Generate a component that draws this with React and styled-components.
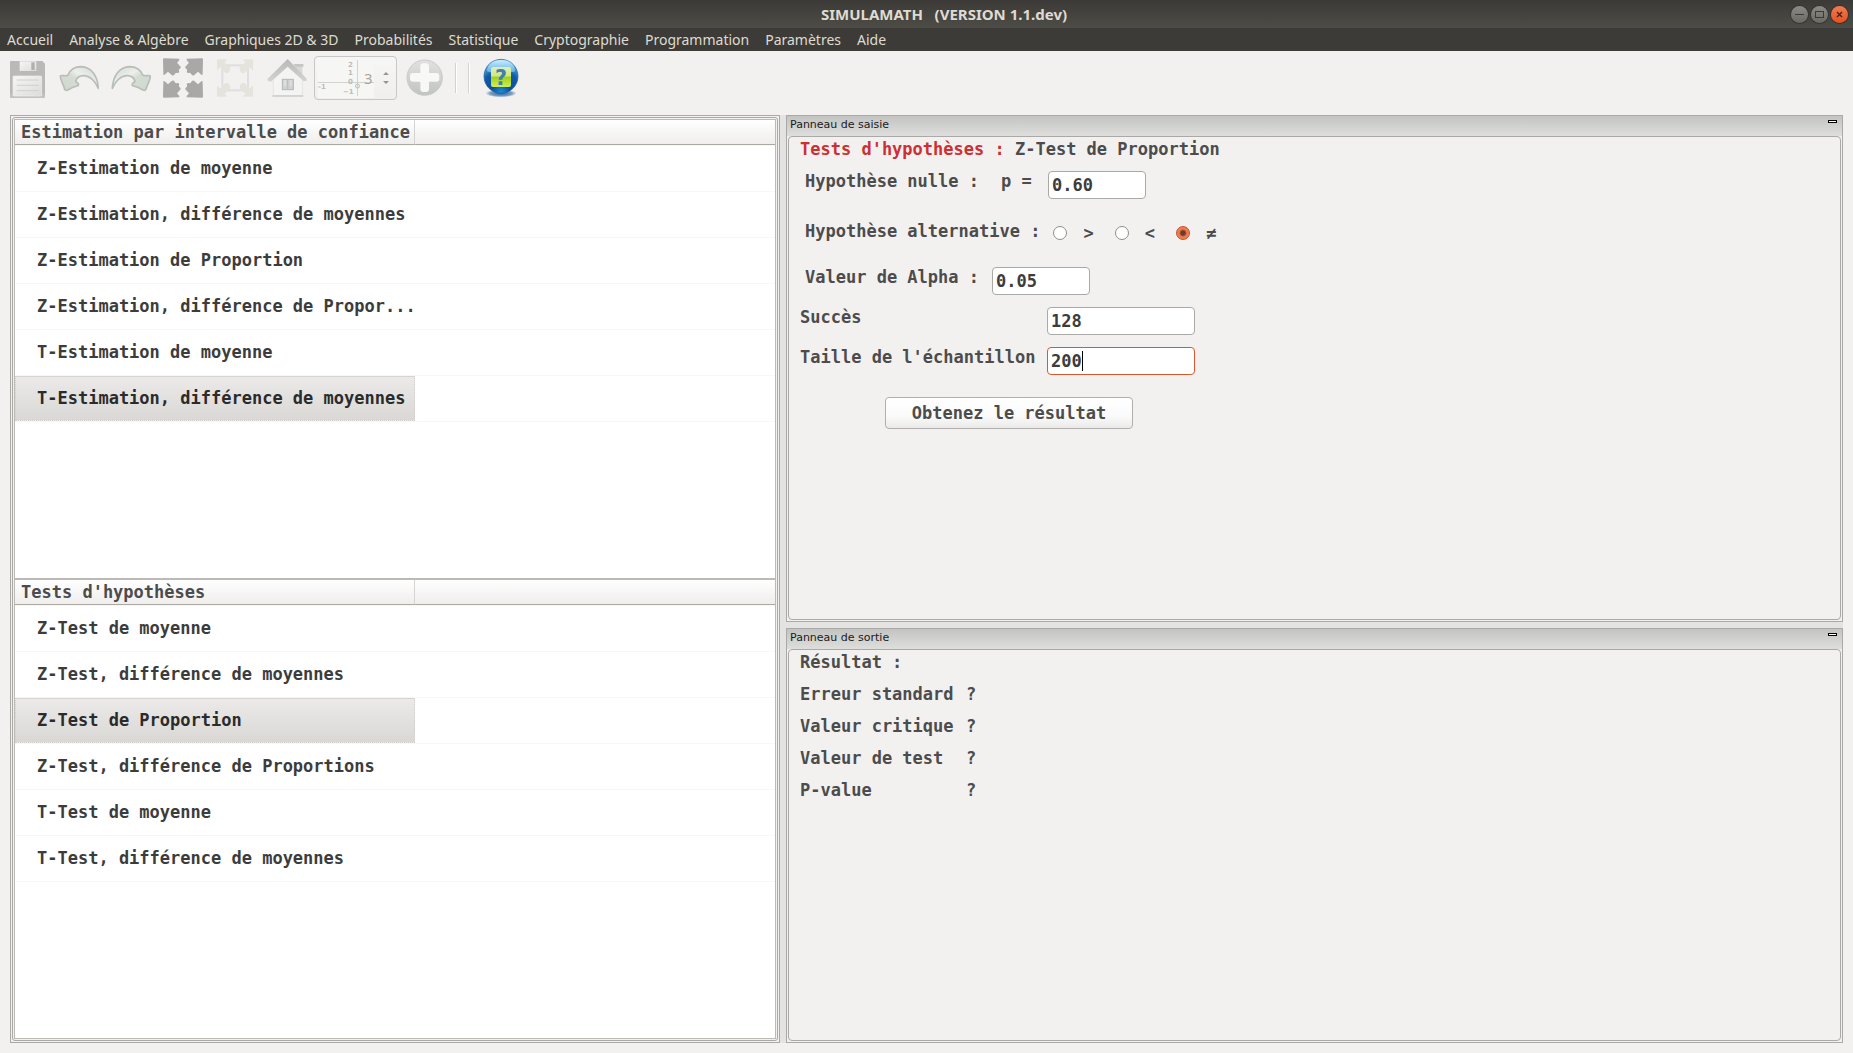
import React, { useState } from "react";
import styled, { createGlobalStyle } from "styled-components";

const menus = [
  "Accueil",
  "Analyse & Algèbre",
  "Graphiques 2D & 3D",
  "Probabilités",
  "Statistique",
  "Cryptographie",
  "Programmation",
  "Paramètres",
  "Aide",
];

const estimations = [
  "Z-Estimation de moyenne",
  "Z-Estimation, différence de moyennes",
  "Z-Estimation de Proportion",
  "Z-Estimation, différence de Propor...",
  "T-Estimation de moyenne",
  "T-Estimation, différence de moyennes",
];

const tests = [
  "Z-Test de moyenne",
  "Z-Test, différence de moyennes",
  "Z-Test de Proportion",
  "Z-Test, différence de Proportions",
  "T-Test de moyenne",
  "T-Test, différence de moyennes",
];

const results = ["Erreur standard", "Valeur critique", "Valeur de test", "P-value"];

function SaveIcon() {
  return (
    <Icon viewBox="0 0 120 120">
      <defs>
        <linearGradient id="label" x1="0" y1="0" x2="1" y2="1">
          <stop offset="0" stopColor="#f6f6f5" />
          <stop offset="1" stopColor="#dcdcdb" />
        </linearGradient>
      </defs>
      <path d="M12 9H106L114 17V116Q114 119 111 119H12Q9 119 9 116V12Q9 9 12 9Z" fill="#bab9b8" />
      <path d="M9 107H114V116Q114 119 111 119H12Q9 119 9 116Z" fill="#c5c0be" />
      <rect x="38" y="10" width="50" height="29" fill="url(#label)" />
      <rect x="73" y="13" width="10" height="23" fill="#b0b0af" />
      <rect x="18" y="54" width="86" height="60" rx="3" fill="url(#label)" stroke="#eeeeed" strokeWidth="2" />
      <path d="M29 66H95M29 82H95M29 98H95" stroke="#d0d0cf" strokeWidth="3" />
    </Icon>
  );
}

function CurvedArrow({ flip }) {
  return (
    <Icon viewBox="0 0 120 120">
      <defs>
        <linearGradient id="curve" x1="0" y1="1" x2="1" y2="0">
          <stop offset="0" stopColor="#cfd7cf" />
          <stop offset="0.45" stopColor="#d5dcd4" />
          <stop offset="0.6" stopColor="#ecefeb" />
          <stop offset="1" stopColor="#cfd7cf" />
        </linearGradient>
      </defs>
      <path
        transform={flip ? "translate(122 0) scale(-1 1)" : undefined}
        d="M4 54C8 49 19 57 27 51C34 35 48 26 66 26C96 27 116 52 118 91C108 70 96 54 76 53C62 52 53 60 50 70L57 76C60 80 58 83 54 84C44 86 34 91 26 96Q20 99 17 94C14 79 3 66 4 54Z"
        fill="url(#curve)"
        stroke="#b9bdb8"
        strokeWidth="5"
        strokeLinejoin="round"
      />
    </Icon>
  );
}

const corners = ["", "translate(120 0) scale(-1 1)", "translate(0 120) scale(1 -1)", "translate(120 120) scale(-1 -1)"];

function ExpandIcon() {
  return (
    <Icon viewBox="0 0 120 120">
      {corners.map((corner) => (
        <path
          key={corner}
          transform={corner}
          d="M2 1L49 2Q51 5 42 14L53 26Q55 31 48 34Q47 37 49 42Q45 46 41 44Q36 44 35 49Q31 55 26 51L15 41L5 50Q0 53 1 46L0 4Z"
          fill="#a9a8a6"
        />
      ))}
    </Icon>
  );
}

function FitIcon() {
  return (
    <Icon viewBox="0 0 120 120">
      <rect x="22" y="22" width="77" height="75" fill="none" stroke="#dfdfe1" strokeWidth="6" />
      {corners.map((corner) => (
        <g key={corner} transform={corner} fill="#e5e4dc">
          <path d="M6 4H37L29 13L39 23Q47 24 46 32Q46 42 37 46Q27 45 25 37L16 28L6 38Z" />
        </g>
      ))}
    </Icon>
  );
}

function HomeIcon() {
  return (
    <Icon viewBox="0 0 120 120">
      <defs>
        <linearGradient id="roof" x1="0" y1="0" x2="0" y2="1">
          <stop offset="0" stopColor="#b8b8b7" />
          <stop offset="1" stopColor="#d3d3d2" />
        </linearGradient>
      </defs>
      <path d="M80 18H109V26H106V58L84 36Z" fill="#d8d8d7" />
      <path d="M80 18H109V26H87Z" fill="#c6c6c5" />
      <path d="M19 61L62 21L106 61V113H19Z" fill="#f4f4f3" stroke="#dededd" strokeWidth="2" />
      <path d="M16 114H109" stroke="#c9c9c8" strokeWidth="4" />
      <path d="M62 3L119 62V68L110 70L62 26L12 71L2 68V62Z" fill="url(#roof)" />
      <rect x="46" y="64" width="33" height="31" fill="#cfd1d3" stroke="#b5b5b4" strokeWidth="3" />
      <path d="M54 66V84M71 66V84" stroke="#dedfe0" strokeWidth="6" />
      <path d="M62 66V94" stroke="#bcbcbc" strokeWidth="3" />
    </Icon>
  );
}

function AddIcon() {
  return (
    <Icon viewBox="0 0 120 120">
      <defs>
        <linearGradient id="disc" x1="0" y1="0" x2="0" y2="1">
          <stop offset="0" stopColor="#e2e2e1" />
          <stop offset="0.5" stopColor="#d0d2d0" />
          <stop offset="1" stopColor="#c0c4c1" />
        </linearGradient>
      </defs>
      <circle cx="59" cy="59" r="53" fill="url(#disc)" stroke="#cbcbca" strokeWidth="3" />
      <rect x="15" y="45" width="88" height="26" rx="9" fill="#f8f8f7" />
      <rect x="46" y="16" width="26" height="86" rx="9" fill="#f8f8f7" />
    </Icon>
  );
}

function HelpIcon() {
  return (
    <Icon viewBox="0 0 120 120">
      <defs>
        <radialGradient id="ball" cx="0.5" cy="0.98" r="0.95">
          <stop offset="0" stopColor="#1d8fdc" />
          <stop offset="0.3" stopColor="#0b4f9a" />
          <stop offset="0.65" stopColor="#125ba6" />
          <stop offset="1" stopColor="#6fc4f2" />
        </radialGradient>
        <linearGradient id="shine" x1="0" y1="0" x2="0" y2="1">
          <stop offset="0" stopColor="#c9ecfd" />
          <stop offset="1" stopColor="#5aaee0" />
        </linearGradient>
        <linearGradient id="tile" x1="0" y1="0" x2="0" y2="1">
          <stop offset="0" stopColor="#ddeebb" />
          <stop offset="0.45" stopColor="#d3e97a" />
          <stop offset="0.5" stopColor="#9fcf1c" />
          <stop offset="1" stopColor="#d2ee58" />
        </linearGradient>
        <radialGradient id="shadow">
          <stop offset="0" stopColor="#2f6296" />
          <stop offset="0.7" stopColor="#7d9fc0" />
          <stop offset="1" stopColor="#f2f1f0" />
        </radialGradient>
      </defs>
      <ellipse cx="60" cy="106" rx="47" ry="12" fill="url(#shadow)" />
      <circle cx="60" cy="55" r="51" fill="url(#ball)" stroke="#1a5fa5" strokeWidth="2" />
      <path d="M18 40C18 18 38 6 60 6S102 18 102 40C90 46 30 46 18 40Z" fill="url(#shine)" />
      <rect x="30" y="27" width="60" height="60" rx="6" fill="url(#tile)" />
      <text x="60" y="80" textAnchor="middle" fontFamily="DejaVu Sans, sans-serif" fontWeight="bold" fontSize="62" fill="#3f7fb5">
        ?
      </text>
    </Icon>
  );
}

function PlotPreview() {
  return (
    <PreviewSvg viewBox="0 0 56 38">
      <rect width="56" height="38" fill="#f6f6f5" />
      <path d="M0 22.5H56M39.5 0V36" stroke="#d2d2d1" />
      <circle cx="39.5" cy="26" r="2" fill="none" stroke="#bdbdbc" />
      <g fontFamily="DejaVu Sans, sans-serif" fontSize="7" fill="#bcbcbb">
        <text x="30" y="7">2</text>
        <text x="30" y="15">1</text>
        <text x="30" y="24">0</text>
        <text x="25" y="34">−1</text>
        <text x="0" y="29">-1</text>
      </g>
    </PreviewSvg>
  );
}

function SelectionTable({ title, items, selected, onSelect }) {
  return (
    <TableArea>
      <Table>
        <thead>
          <tr>
            <HeadCell scope="col" $main>{title}</HeadCell>
            <HeadCell as="td" />
          </tr>
        </thead>
        <tbody>
          {items.map((item) => (
            <Row key={item}>
              <Cell>
                <ItemButton type="button" $selected={item === selected} onClick={() => onSelect(item)}>
                  {item}
                </ItemButton>
              </Cell>
              <Cell />
            </Row>
          ))}
        </tbody>
      </Table>
    </TableArea>
  );
}

function Dock({ title, children }) {
  return (
    <DockFrame>
      <DockTitle>
        <DockName>{title}</DockName>
        <CollapseButton type="button" aria-label={`Réduire ${title}`} />
      </DockTitle>
      <DockBody>{children}</DockBody>
    </DockFrame>
  );
}

function App() {
  const [estimation, setEstimation] = useState(estimations[5]);
  const [test, setTest] = useState(tests[2]);
  const [proportion, setProportion] = useState("0.60");
  const [alternative, setAlternative] = useState("≠");
  const [alpha, setAlpha] = useState("0.05");
  const [success, setSuccess] = useState("128");
  const [sample, setSample] = useState("200");

  return (
    <Window>
      <GlobalStyle />
      <TitleBar>
        <Title>{"SIMULAMATH   (VERSION 1.1.dev)"}</Title>
        <WindowButton type="button" aria-label="Minimiser">
          <svg width="17" height="17"><path d="M4 8.5H13" stroke="#3c3b37" /></svg>
        </WindowButton>
        <WindowButton type="button" aria-label="Agrandir">
          <svg width="17" height="17"><rect x="4.5" y="5.5" width="8" height="6" fill="none" stroke="#3c3b37" /></svg>
        </WindowButton>
        <WindowButton type="button" aria-label="Fermer" $close>
          <svg width="17" height="17"><path d="M6 6L11 11M11 6L6 11" stroke="#4a2418" strokeWidth="1.5" /></svg>
        </WindowButton>
      </TitleBar>

      <MenuBar>
        {menus.map((menu) => (
          <MenuButton key={menu} type="button">{menu}</MenuButton>
        ))}
      </MenuBar>

      <Toolbar>
        <ToolButton type="button" aria-label="Enregistrer"><SaveIcon /></ToolButton>
        <ToolButton type="button" aria-label="Annuler"><CurvedArrow /></ToolButton>
        <ToolButton type="button" aria-label="Rétablir"><CurvedArrow flip /></ToolButton>
        <ToolButton type="button" aria-label="Plein écran"><ExpandIcon /></ToolButton>
        <ToolButton type="button" aria-label="Ajuster"><FitIcon /></ToolButton>
        <ToolButton type="button" aria-label="Vue initiale"><HomeIcon /></ToolButton>
        <SpinBox>
          <PlotPreview />
          <SpinInput type="text" aria-label="Échelle" value="3" disabled />
          <SpinArrows viewBox="0 0 6 12">
            <path d="M0 3L3 0L6 3ZM0 9L3 12L6 9Z" fill="#969593" />
          </SpinArrows>
        </SpinBox>
        <ToolButton type="button" aria-label="Ajouter"><AddIcon /></ToolButton>
        <Separators />
        <ToolButton type="button" aria-label="Aide"><HelpIcon /></ToolButton>
      </Toolbar>

      <Workspace>
        <OuterFrame>
          <InnerFrame>
            <SelectionTable
              title="Estimation par intervalle de confiance"
              items={estimations}
              selected={estimation}
              onSelect={setEstimation}
            />
            <SelectionTable title="Tests d'hypothèses" items={tests} selected={test} onSelect={setTest} />
          </InnerFrame>
        </OuterFrame>

        <Docks>
          <Dock title="Panneau de saisie">
            <Heading><em>Tests d'hypothèses :</em> {test}</Heading>
            <FormRow>
              <Label htmlFor="proportion">Hypothèse nulle :</Label>
              <Symbol>p =</Symbol>
              <Input id="proportion" value={proportion} onChange={(e) => setProportion(e.target.value)} />
            </FormRow>
            <RadioRow role="radiogroup" aria-labelledby="alternative">
              <Legend id="alternative">Hypothèse alternative :</Legend>
              {[">", "<", "≠"].map((sign) => (
                <RadioLabel key={sign}>
                  <Radio
                    type="radio"
                    name="alternative"
                    checked={alternative === sign}
                    onChange={() => setAlternative(sign)}
                  />
                  {sign}
                </RadioLabel>
              ))}
            </RadioRow>
            <FormRow>
              <Label htmlFor="alpha">Valeur de Alpha :</Label>
              <Input id="alpha" value={alpha} onChange={(e) => setAlpha(e.target.value)} />
            </FormRow>
            <FieldGrid>
              <Label htmlFor="success">Succès</Label>
              <Input id="success" $wide value={success} onChange={(e) => setSuccess(e.target.value)} />
              <Label htmlFor="sample">Taille de l'échantillon</Label>
              <CaretField>
                <Input id="sample" $wide $active value={sample} onChange={(e) => setSample(e.target.value)} />
                <Caret style={{ left: `calc(4px + ${sample.length}ch)` }} />
              </CaretField>
            </FieldGrid>
            <SubmitButton type="button">Obtenez le résultat</SubmitButton>
          </Dock>

          <Dock title="Panneau de sortie">
            <Heading>Résultat :</Heading>
            <ResultList>
              {results.map((result) => (
                <React.Fragment key={result}>
                  <dt>{result}</dt>
                  <dd>?</dd>
                </React.Fragment>
              ))}
            </ResultList>
          </Dock>
        </Docks>
      </Workspace>
    </Window>
  );
}

const GlobalStyle = createGlobalStyle`
  * {
    box-sizing: border-box;
  }

  body {
    margin: 0;
    background: #f2f1f0;
  }

  button, input {
    font: inherit;
    color: inherit;
    margin: 0;
  }
`;

const Window = styled.div`
  min-height: 100vh;
  display: flex;
  flex-direction: column;
  background: #f2f1f0;
  color: #4c4c4c;
  font: bold 17px/20px "DejaVu Sans Mono", monospace;
`;

const TitleBar = styled.header`
  display: flex;
  align-items: center;
  gap: 3px;
  height: 28px;
  padding: 0 5px 0 100px;
  background: linear-gradient(#3b3a36, #4d4c46);
`;

const Title = styled.h1`
  flex: 1;
  margin: 0;
  text-align: center;
  white-space: pre;
  color: #dfdbd2;
  font: bold 15px/20px "Noto Sans", sans-serif;
`;

const WindowButton = styled.button`
  display: flex;
  width: 17px;
  height: 17px;
  padding: 0;
  border: none;
  border-radius: 50%;
  background: ${(props) => (props.$close ? "linear-gradient(#f37a52, #e4521f)" : "linear-gradient(#8b8a84, #6a6963)")};
  box-shadow: 0 0 0 1px #35342f;
`;

const MenuBar = styled.nav`
  display: flex;
  gap: 2px;
  height: 23px;
  background: #3c3b37;
`;

const MenuButton = styled.button`
  padding: 0 7px;
  border: none;
  background: none;
  color: #dfdbd2;
  font: 14px/23px "Noto Sans", sans-serif;
`;

const Toolbar = styled.div`
  display: flex;
  align-items: center;
  height: 64px;
  padding: 0 1px 10px;
`;

const ToolButton = styled.button`
  display: flex;
  justify-content: center;
  width: 52px;
  padding: 0;
  border: none;
  background: none;
`;

const Icon = styled.svg`
  width: 40px;
  height: 40px;
`;

const SpinBox = styled.div`
  position: relative;
  display: flex;
  align-items: center;
  justify-content: flex-end;
  gap: 5px;
  width: 83px;
  height: 44px;
  margin: 0 2px 0 1px;
  padding-right: 7px;
  border: 1px solid #c8c7c5;
  border-radius: 4px;
  background: linear-gradient(#f6f6f5, #f0efee);
`;

const PreviewSvg = styled.svg`
  position: absolute;
  left: 3px;
  top: 3px;
  width: 56px;
  height: 38px;
`;

const SpinInput = styled.input`
  position: relative;
  width: 14px;
  padding: 0;
  border: none;
  background: none;
  color: #a9a6a2;
  font: 15px/20px "Noto Sans", sans-serif;
`;

const SpinArrows = styled.svg`
  width: 6px;
  height: 12px;
`;

const Separators = styled.div`
  width: 14px;
  height: 30px;
  margin: 0 6px 0 4px;
  border: solid #d3d2d0;
  border-width: 0 1px;
  box-shadow: 1px 0 #fff, inset 1px 0 #fff;
`;

const Workspace = styled.main`
  flex: 1;
  display: grid;
  grid-template-columns: 770fr 1057fr;
  column-gap: 6px;
  margin: 0 10px 10px;
  background: #e3e3e2;
`;

const OuterFrame = styled.section`
  display: flex;
  padding: 1px;
  border: 1px solid #aaa9a7;
  background: #f2f1f0;
`;

const InnerFrame = styled.div`
  flex: 1;
  display: grid;
  grid-template-rows: 1fr 1fr;
  padding: 1px;
  border: 1px solid #aaa9a7;
  border-radius: 3px;
`;

const TableArea = styled.div`
  border: 1px solid #bdb9b5;
  background: #fff;
`;

const Table = styled.table`
  width: 100%;
  table-layout: fixed;
  border-collapse: separate;
  border-spacing: 0;
`;

const HeadCell = styled.th`
  width: ${(props) => (props.$main ? "400px" : "auto")};
  height: 25px;
  padding: 0 6px;
  border-bottom: 1px solid #aaa9a2;
  border-right: ${(props) => (props.$main ? "1px solid #d5d4d2" : "none")};
  background: linear-gradient(#fff, #efeeed);
  text-align: left;
  white-space: nowrap;
`;

const Cell = styled.td`
  height: 46px;
  padding: 0;
  border-top: 1px solid #f7f7f7;
`;

const Row = styled.tr`
  &:last-child ${Cell} {
    height: 47px;
    border-bottom: 1px solid #f7f7f7;
  }
`;

const ItemButton = styled.button`
  display: block;
  width: 100%;
  height: 45px;
  padding: 0 21px 2px;
  border: 1px dotted ${(props) => (props.$selected ? "#d0cfcb" : "transparent")};
  background: ${(props) => (props.$selected ? "linear-gradient(#ebeae9, #dad8d5)" : "none")};
  color: ${(props) => (props.$selected ? "#2b2b2b" : "#3c3c3c")};
  text-align: left;
  white-space: nowrap;
`;

const Docks = styled.div`
  display: grid;
  grid-template-rows: 507fr 415fr;
  row-gap: 6px;
`;

const DockFrame = styled.section`
  display: flex;
  flex-direction: column;
  padding: 0 1px 1px;
  border: 1px solid #aaa9a7;
  background: #f2f1f0;
`;

const DockTitle = styled.header`
  display: flex;
  justify-content: space-between;
  height: 20px;
  margin: 0 -1px;
  padding: 0 5px 0 3px;
  background: linear-gradient(#c3c3c1, #dededd);
`;

const DockName = styled.h2`
  margin: 0;
  color: #1a1a1a;
  font: 11px/17px "DejaVu Sans", sans-serif;
`;

const CollapseButton = styled.button`
  width: 9px;
  height: 3px;
  margin-top: 4px;
  padding: 0;
  border: 1px solid #000;
  background: #fff;
`;

const DockBody = styled.div`
  flex: 1;
  padding: 2px 11px;
  border: 1px solid #aaa9a7;
  border-radius: 4px;
`;

const Heading = styled.h3`
  margin: 0 0 12px;
  font: inherit;

  em {
    color: #cc3033;
    font-style: normal;
  }
`;

const FormRow = styled.div`
  display: flex;
  align-items: flex-start;
  margin-bottom: 12px;
  padding-left: 5px;
`;

const RadioRow = styled.div`
  display: flex;
  gap: 21px;
  height: 24px;
  margin: 22px 0;
  padding-left: 5px;
`;

const Label = styled.label`
  min-width: 187px;
  white-space: nowrap;
`;

const Legend = styled.span`
  margin-right: -8px;
`;

const Symbol = styled.span`
  width: 56px;
  padding-left: 9px;
`;

const Input = styled.input`
  width: ${(props) => (props.$wide ? "148px" : "98px")};
  height: 28px;
  padding: 0 3px;
  border: 1px solid ${(props) => (props.$active ? "#d9592d" : "#aaa9a5")};
  border-radius: 4px;
  outline: none;
  background: #fff;
  color: #3c3c3c;
`;

const RadioLabel = styled.label`
  display: flex;
  align-items: center;
  gap: 16px;
`;

const Radio = styled.input`
  appearance: none;
  width: 14px;
  height: 14px;
  border: 1px solid #8f8e8b;
  border-radius: 50%;
  background: #fff;

  &:checked {
    border-color: #c4532f;
    background: radial-gradient(#6b3a28 2px, #f07c50 4px);
  }
`;

const FieldGrid = styled.div`
  display: grid;
  grid-template-columns: 247px auto;
  justify-content: start;
  row-gap: 12px;
`;

const CaretField = styled.div`
  position: relative;
  display: flex;
`;

const Caret = styled.span`
  position: absolute;
  top: 4px;
  width: 1px;
  height: 20px;
  background: #000;
`;

const SubmitButton = styled.button`
  display: block;
  width: 248px;
  height: 32px;
  margin: 22px 0 0 85px;
  border: 1px solid #b0afad;
  border-radius: 4px;
  background: linear-gradient(#fff, #fafafa 60%, #ebeae9);
`;

const ResultList = styled.dl`
  display: grid;
  grid-template-columns: 166px auto;
  row-gap: 12px;
  margin: 0;

  dd {
    margin: 0;
  }
`;

export default App;
